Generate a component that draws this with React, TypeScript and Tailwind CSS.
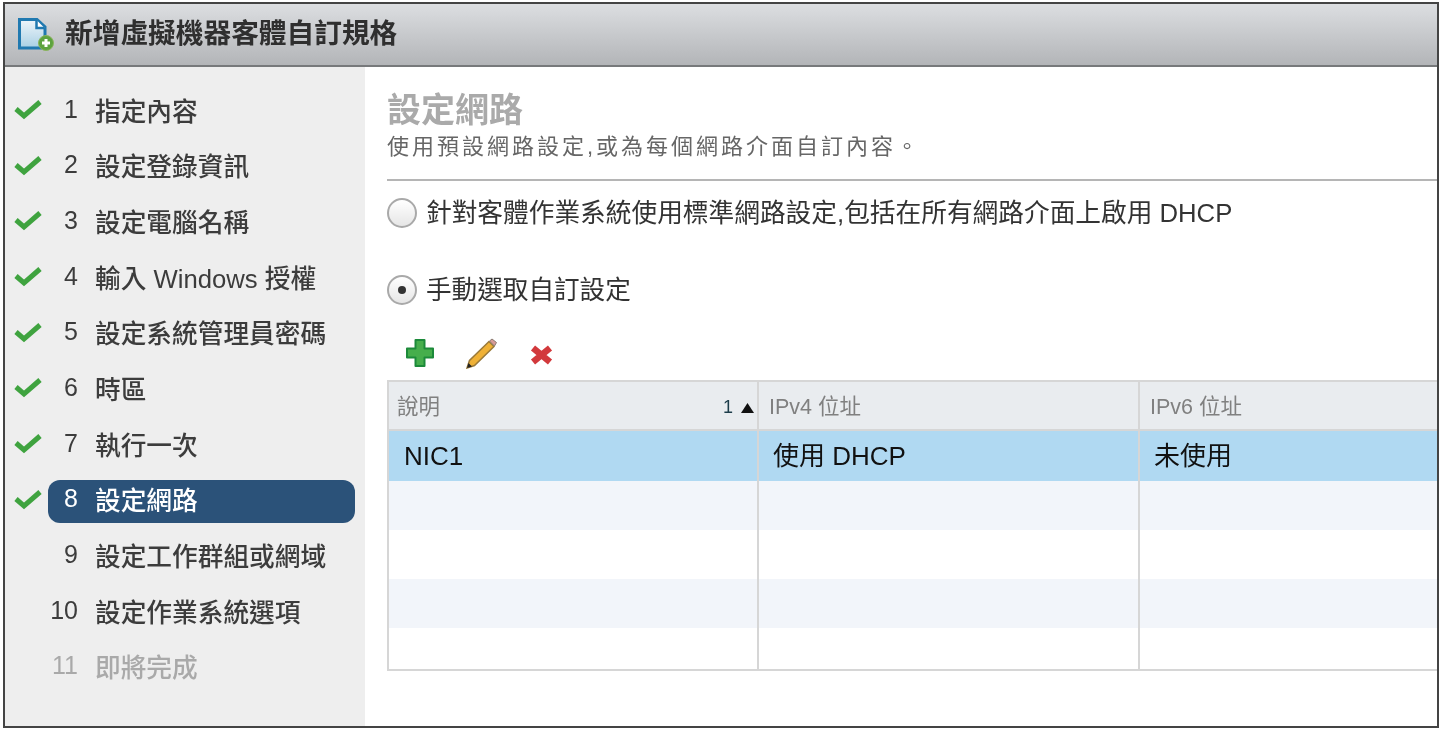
import React from 'react';

const cjk = { fontFamily: '"Liberation Sans", "Noto Sans CJK TC", sans-serif' };

const steps = [
  { n: '1', label: '指定內容', done: true },
  { n: '2', label: '設定登錄資訊', done: true },
  { n: '3', label: '設定電腦名稱', done: true },
  { n: '4', label: '輸入 Windows 授權', done: true },
  { n: '5', label: '設定系統管理員密碼', done: true },
  { n: '6', label: '時區', done: true },
  { n: '7', label: '執行一次', done: true },
  { n: '8', label: '設定網路', done: true, active: true },
  { n: '9', label: '設定工作群組或網域' },
  { n: '10', label: '設定作業系統選項' },
  { n: '11', label: '即將完成', disabled: true },
];

const DocIcon = () => (
  <svg width="36" height="33" viewBox="0 0 36 33" className="shrink-0">
    <defs>
      <linearGradient id="page" x1="0" y1="0" x2="0" y2="1">
        <stop offset="0" stopColor="#eef5fa" />
        <stop offset="1" stopColor="#a9d0e4" />
      </linearGradient>
    </defs>
    <path d="M1.5 1.5H19L27 9V30H1.5Z" fill="url(#page)" stroke="#2079b0" strokeWidth="3" />
    <path d="M18.5 2V10H26.5" fill="#fff" stroke="#2079b0" strokeWidth="2.5" />
    <circle cx="28" cy="25" r="7.5" fill="#5da33f" stroke="#8ab45c" strokeWidth="1" />
    <path d="M28 21V29M24 25H32" stroke="#fff" strokeWidth="3" />
  </svg>
);

const Check = () => (
  <svg width="28" height="20" viewBox="0 0 28 20" className="block mb-[4px]">
    <path d="M2 9L10 16L26 2" fill="none" stroke="#3fa33f" strokeWidth="5" />
  </svg>
);

const Radio = ({ on }: { on?: boolean }) => (
  <span className="w-[30px] h-[30px] shrink-0 rounded-full border-2 border-[#a9a9a9] bg-gradient-to-b from-white to-[#e6e6e6] flex items-center justify-center">
    {on && <span className="w-[8px] h-[8px] rounded-full bg-[#333]" />}
  </span>
);

const PlusIcon = () => (
  <svg width="28" height="28" viewBox="0 0 28 28" className="block">
    <path d="M9.5 1H18.5V9.5H27V18.5H18.5V27H9.5V18.5H1V9.5H9.5Z" fill="#46ae4c" stroke="#1c8a3a" strokeWidth="2" strokeLinejoin="round" />
  </svg>
);

const PencilIcon = () => (
  <svg width="31" height="31" viewBox="0 0 31 31" className="block">
    <path d="M1 30L3.5 22.5L23 3.5L28 8.5L8.5 27.5Z" fill="#efb136" stroke="#9a7a3a" strokeWidth="1.5" />
    <path d="M23.5 3L26 1L30.5 4.5L28.5 8Z" fill="#d89a96" stroke="#8a7a70" strokeWidth="1" />
    <path d="M1 30L2.5 25L6 28.5Z" fill="#222" />
  </svg>
);

const CloseIcon = () => (
  <svg width="23" height="20" viewBox="0 0 23 20" className="block">
    <path d="M3 3L20 17M20 3L3 17" stroke="#d2393c" strokeWidth="6.5" />
  </svg>
);

const rows = [
  { bg: 'bg-[#b0d9f2]', h: 'h-[50px]', cells: ['NIC1', '使用 DHCP', '未使用'] },
  { bg: 'bg-[#f2f5fa]', h: 'h-[49px]', cells: ['', '', ''] },
  { bg: 'bg-white', h: 'h-[49px]', cells: ['', '', ''] },
  { bg: 'bg-[#f2f5fa]', h: 'h-[49px]', cells: ['', '', ''] },
  { bg: 'bg-white', h: 'h-[41px]', cells: ['', '', ''] },
];

export default function App() {
  return (
    <div className="w-[1442px] h-[732px] bg-white pt-[2px] pl-[3px] overflow-hidden blur-[0.7px]" style={cjk}>
      <div className="w-[1436px] h-[726px] border-2 border-[#444] flex flex-col overflow-hidden">
        <div className="h-[63px] shrink-0 bg-gradient-to-b from-[#dcdee1] to-[#b3b5b8] border-b-2 border-[#77797b] flex items-center pl-[13px] gap-[11px]">
          <DocIcon />
          <h1 className="text-[27.7px] font-bold text-[#2f2f2f] whitespace-nowrap mb-[2px]">新增虛擬機器客體自訂規格</h1>
        </div>

        <div className="flex flex-1 min-h-0">
          <aside className="w-[360px] shrink-0 bg-[#eeeeee] pt-[17px]">
            {steps.map((s) => (
              <div key={s.n} className="h-[55.7px] flex items-center">
                <div className="w-[43px] pl-[9px] shrink-0 flex items-center">{s.done && <Check />}</div>
                <div
                  className={`w-[307px] h-[43px] rounded-[12px] flex items-center text-[25.7px] font-medium whitespace-nowrap ${
                    s.active ? 'bg-[#2b5279] text-white font-bold' : s.disabled ? 'text-[#a9a9a9]' : 'text-[#3c3c3c]'
                  }`}
                >
                  <span className="w-[30px] text-right text-[25px] mb-[5px]">{s.n}</span>
                  <span className="ml-[17px]">{s.label}</span>
                </div>
              </div>
            ))}
          </aside>

          <main className="flex-1 min-w-0 pt-[21px] pl-[22px]">
            <h2 className="text-[34px] leading-[44px] font-bold text-[#aaaaaa]">設定網路</h2>
            <p className="text-[22px] leading-[30px] tracking-[3px] text-[#666] whitespace-nowrap">使用預設網路設定,或為每個網路介面自訂內容。</p>
            <div className="h-[2px] bg-[#b5b5b5] mt-[17px]" />

            <label className="flex items-center gap-[9px] mt-[16px] h-[32px] text-[25.7px] text-[#333] whitespace-nowrap">
              <Radio />
              針對客體作業系統使用標準網路設定,包括在所有網路介面上啟用 DHCP
            </label>
            <label className="flex items-center gap-[9px] mt-[45px] h-[32px] text-[25.6px] text-[#333] whitespace-nowrap">
              <Radio on />
              手動選取自訂設定
            </label>

            <div className="flex items-center h-[34px] mt-[30px] pl-[19px]">
              <PlusIcon />
              <span className="ml-[32px]"><PencilIcon /></span>
              <span className="ml-[33px] mt-[4px]"><CloseIcon /></span>
            </div>

            <div className="mt-[10px] border-2 border-r-0 border-[#d6d6d6]">
              <div className="grid grid-cols-[370px_381px_1fr] h-[49px] bg-[#e9ecef] border-b-2 border-[#d6d6d6] text-[21.5px] text-[#808080]">
                <div className="flex items-center justify-between pl-[8px] pr-[3px] pt-[4px] border-r-2 border-[#d6d6d6]">
                  <span>說明</span>
                  <span className="text-[#1d3d4a] text-[18px] flex items-center gap-[8px]">
                    1
                    <svg width="13" height="10" viewBox="0 0 13 10"><path d="M6.5 0L13 10H0Z" fill="#111" /></svg>
                  </span>
                </div>
                <div className="flex items-center pl-[10px] pt-[4px] border-r-2 border-[#d6d6d6]">IPv4 位址</div>
                <div className="flex items-center pl-[10px] pt-[4px]">IPv6 位址</div>
              </div>
              {rows.map((r, i) => (
                <div key={i} className={`grid grid-cols-[370px_381px_1fr] ${r.h} ${r.bg} text-[26px] text-[#111]`}>
                  <div className="flex items-center pl-[15px] border-r-2 border-[#d6d6d6]">{r.cells[0]}</div>
                  <div className="flex items-center pl-[14px] border-r-2 border-[#d6d6d6]">{r.cells[1]}</div>
                  <div className="flex items-center pl-[14px]">{r.cells[2]}</div>
                </div>
              ))}
            </div>
          </main>
        </div>
      </div>
    </div>
  );
}
